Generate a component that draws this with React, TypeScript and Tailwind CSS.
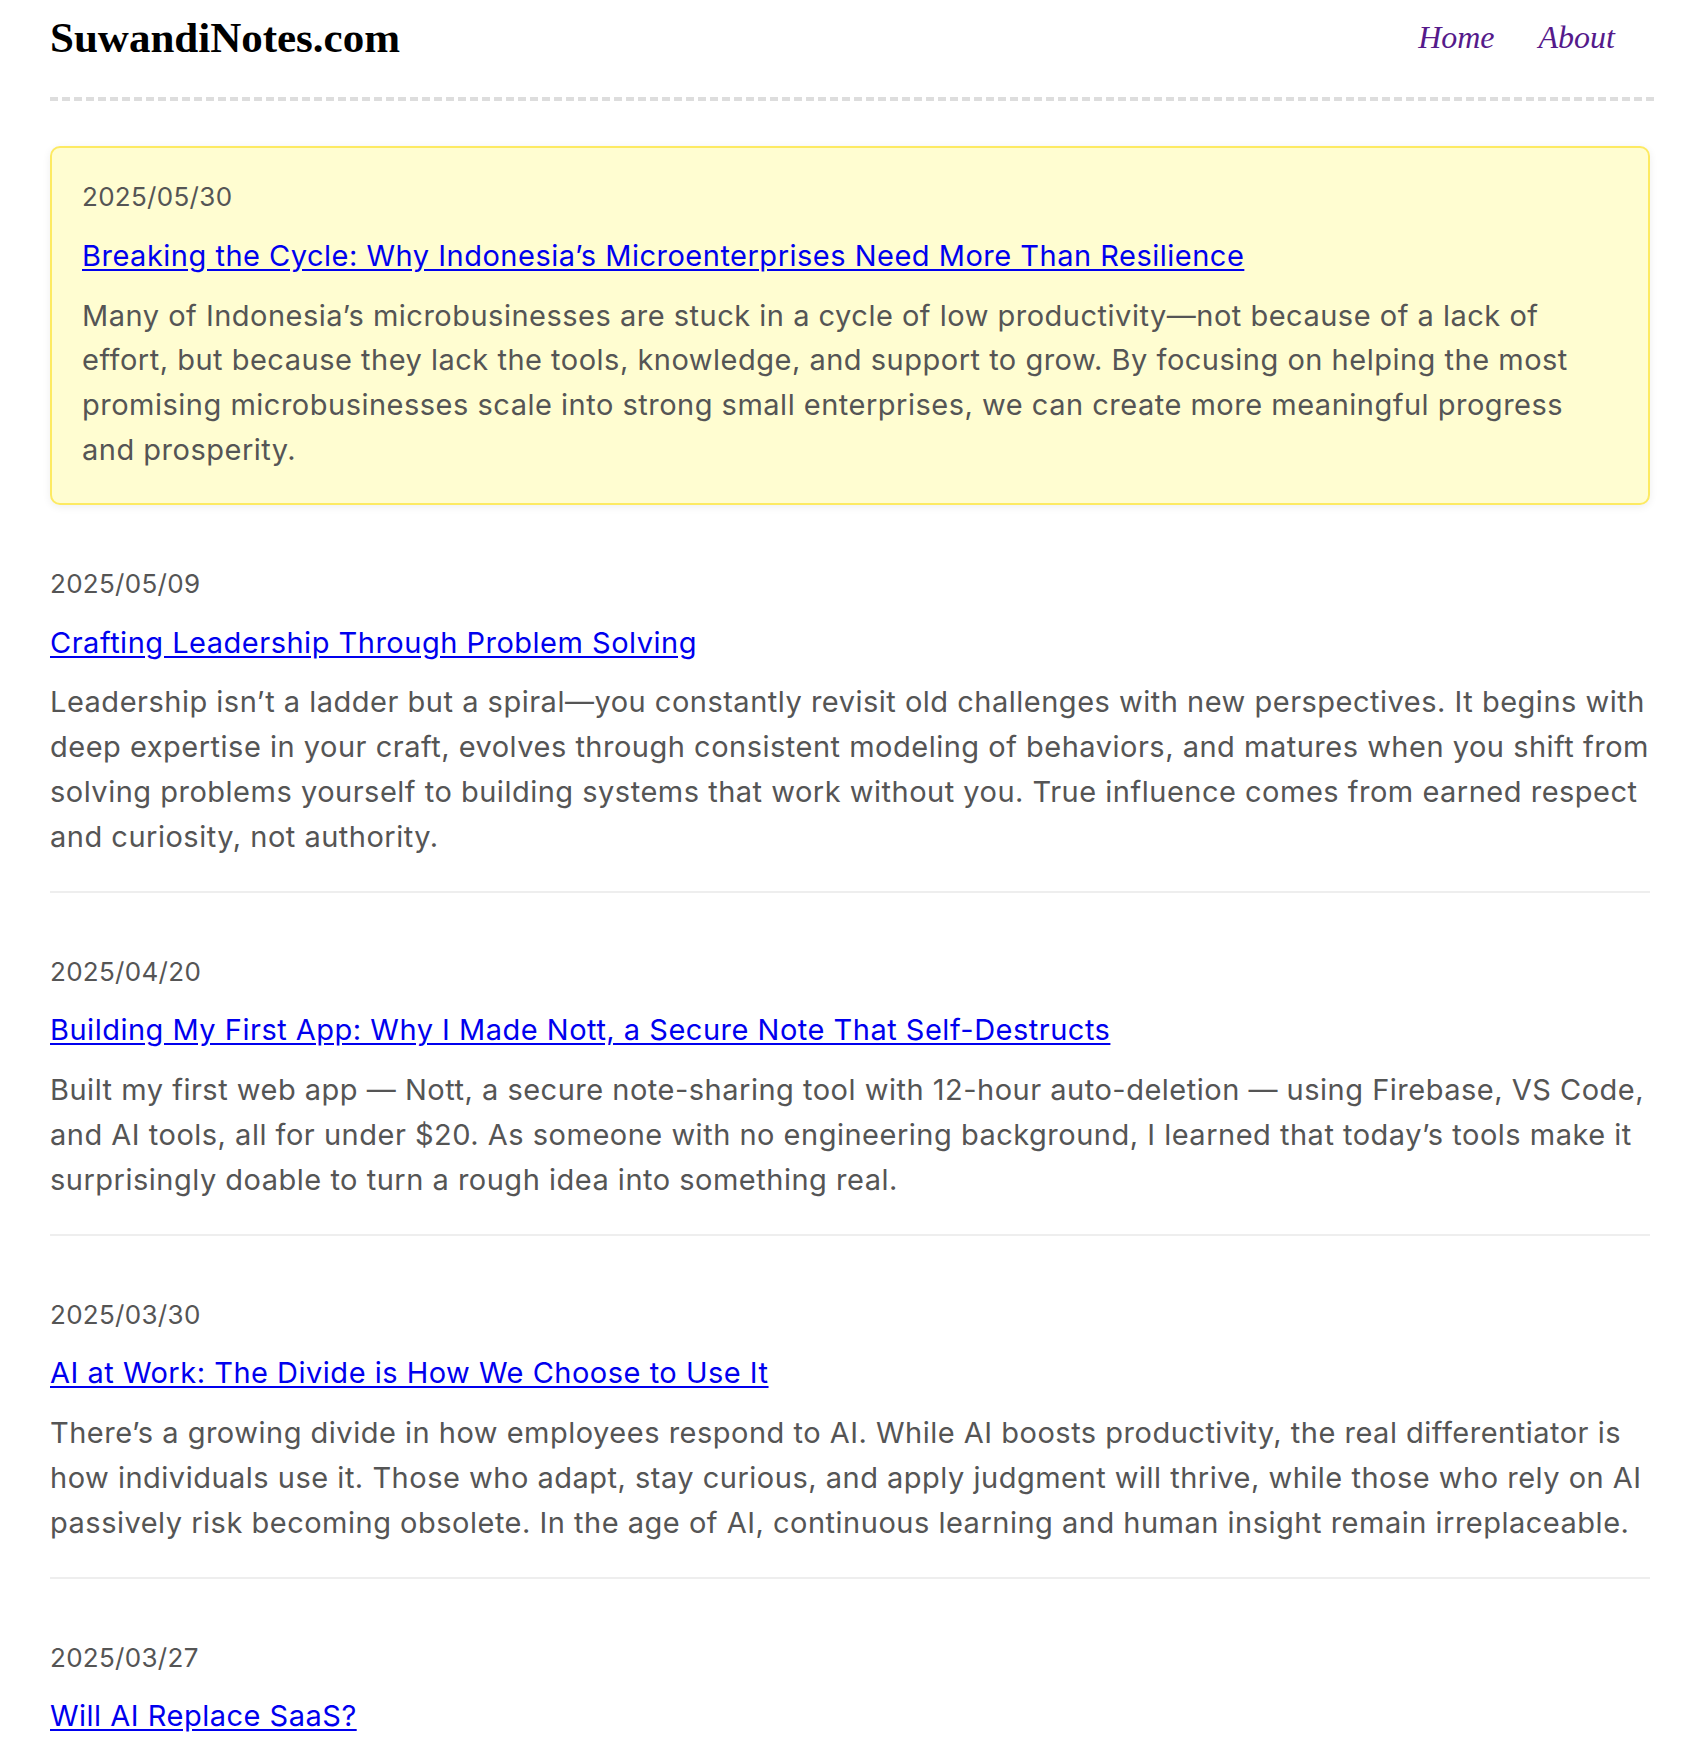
const FEATURED = {
  date: '2025/05/30',
  title: 'Breaking the Cycle: Why Indonesia’s Microenterprises Need More Than Resilience',
  summary:
    'Many of Indonesia’s microbusinesses are stuck in a cycle of low productivity—not because of a lack of effort, but because they lack the tools, knowledge, and support to grow. By focusing on helping the most promising microbusinesses scale into strong small enterprises, we can create more meaningful progress and prosperity.',
};

const POSTS = [
  {
    date: '2025/05/09',
    title: 'Crafting Leadership Through Problem Solving',
    summary:
      'Leadership isn’t a ladder but a spiral—you constantly revisit old challenges with new perspectives. It begins with deep expertise in your craft, evolves through consistent modeling of behaviors, and matures when you shift from solving problems yourself to building systems that work without you. True influence comes from earned respect and curiosity, not authority.',
  },
  {
    date: '2025/04/20',
    title: 'Building My First App: Why I Made Nott, a Secure Note That Self-Destructs',
    summary:
      'Built my first web app — Nott, a secure note-sharing tool with 12-hour auto-deletion — using Firebase, VS Code, and AI tools, all for under $20. As someone with no engineering background, I learned that today’s tools make it surprisingly doable to turn a rough idea into something real.',
  },
  {
    date: '2025/03/30',
    title: 'AI at Work: The Divide is How We Choose to Use It',
    summary:
      'There’s a growing divide in how employees respond to AI. While AI boosts productivity, the real differentiator is how individuals use it. Those who adapt, stay curious, and apply judgment will thrive, while those who rely on AI passively risk becoming obsolete. In the age of AI, continuous learning and human insight remain irreplaceable.',
  },
  {
    date: '2025/03/27',
    title: 'Will AI Replace SaaS?',
    summary: '',
  },
];

function PostBody({ date, title, summary }: { date: string; title: string; summary: string }) {
  return (
    <>
      <div className="mb-[14px] text-[26px] tracking-[0.3px] text-[#555]">{date}</div>
      <h2 className="mb-[15px] text-[29px] font-normal leading-[44.8px]">
        <a href="#" className="text-[#0000ee] underline underline-offset-[3px]">
          {title}
        </a>
      </h2>
      {summary && <p className="text-[#555]">{summary}</p>}
    </>
  );
}

export default function App() {
  return (
    <div className="min-h-screen bg-white px-[50px] font-['Inter',sans-serif] text-[29px] leading-[44.8px] tracking-[0.5px]">
      {/* header */}
      <header className="flex items-start justify-between border-b-4 border-dashed border-[#dddddd] pb-[36px] tracking-normal">
        <h1 className="mt-[14px] font-['Liberation_Serif',serif] text-[43px] font-bold leading-[47px] text-black">
          SuwandiNotes.com
        </h1>
        <nav className="mr-[39px] mt-[19px] flex gap-[44px] font-['Liberation_Serif',serif] text-[32px] italic leading-[37px]">
          <a href="#" className="text-[#551a8b]">Home</a>
          <a href="#" className="text-[#551a8b]">About</a>
        </nav>
      </header>

      <main className="mr-[4px] pt-[45px]">
        {/* featured */}
        <article className="mb-[57px] rounded-[10px] border-2 border-[#fdea62] bg-[#fffdd1] px-[30px] pb-[30px] pt-[27px] shadow-[0_2px_8px_rgba(0,0,0,0.07)]">
          <PostBody {...FEATURED} />
        </article>

        {POSTS.map((post, i) => (
          <article
            key={post.date}
            className={i < POSTS.length - 1 ? 'mb-[57px] border-b-2 border-[#eeeeee] pb-[31px]' : ''}
          >
            <PostBody {...post} />
          </article>
        ))}
      </main>
    </div>
  );
}
